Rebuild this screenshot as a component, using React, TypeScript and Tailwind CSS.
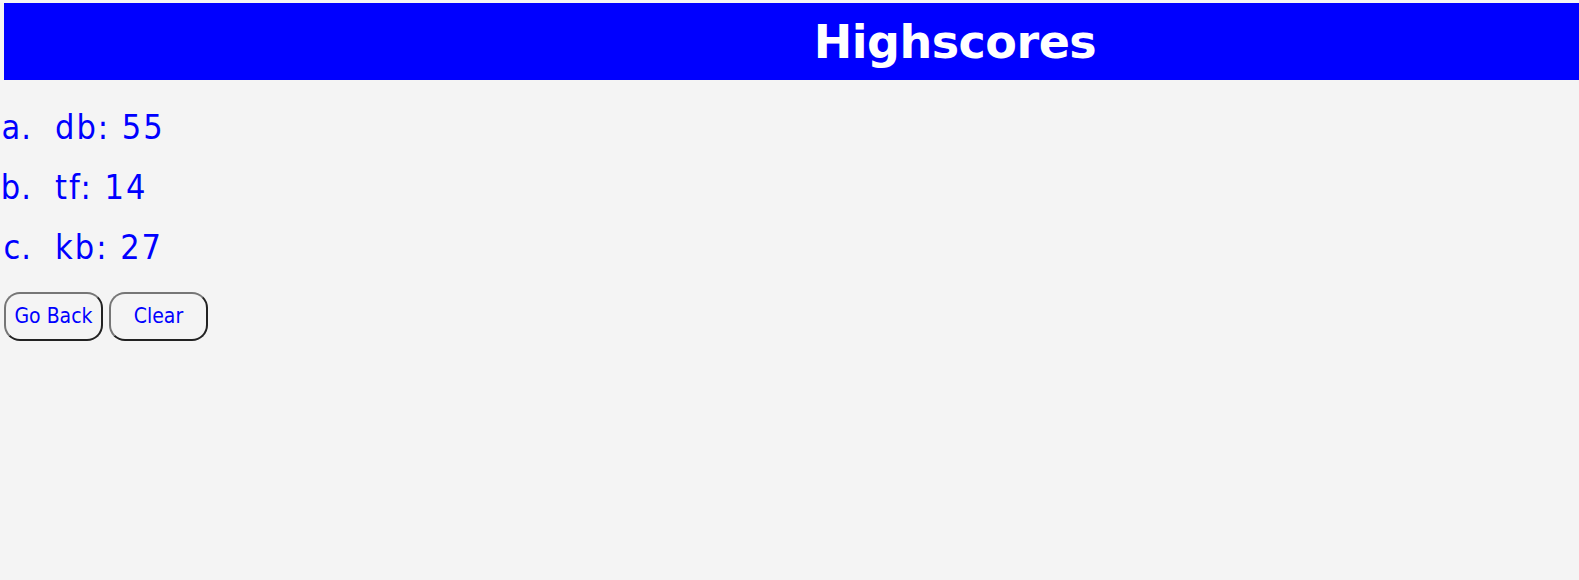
export default function App() {
  const rows = [
    ["a.", "db: 55"],
    ["b.", "tf: 14"],
    ["c.", "kb: 27"],
  ];
  return (
    <div className="min-h-screen bg-[#f4f4f4] pt-[3px]" style={{ fontFamily: '"DejaVu Sans", sans-serif' }}>
      <div className="ml-[4px] h-[77px] bg-[#0000ff] flex items-center justify-center pl-[327px]">
        <h1 className="text-white font-bold text-[46px] leading-none tracking-[-0.5px]">Highscores</h1>
      </div>
      <div className="mt-[17px] flex flex-col text-[#0000ff] text-[34px] font-['DejaVu_Sans_Condensed',sans-serif] tracking-[2px]">
        {rows.map(([m, t]) => (
          <div key={m} className="flex h-[60px] leading-[60px]">
            <span className="w-[32px] text-right tracking-[1px]">{m}</span>
            <span className="ml-[23px]">{t}</span>
          </div>
        ))}
      </div>
      <div className="mt-[15px] ml-[4px] flex gap-[6px]">
        {["Go Back", "Clear"].map((b) => (
          <button
            key={b}
            className="w-[99px] h-[49px] rounded-[16px] border-2 border-t-[#767676] border-l-[#767676] border-b-[#222] border-r-[#222] bg-[#f4f4f4] text-[#0000ff] text-[21px] font-['DejaVu_Sans_Condensed',sans-serif]"
          >
            {b}
          </button>
        ))}
      </div>
    </div>
  );
}
